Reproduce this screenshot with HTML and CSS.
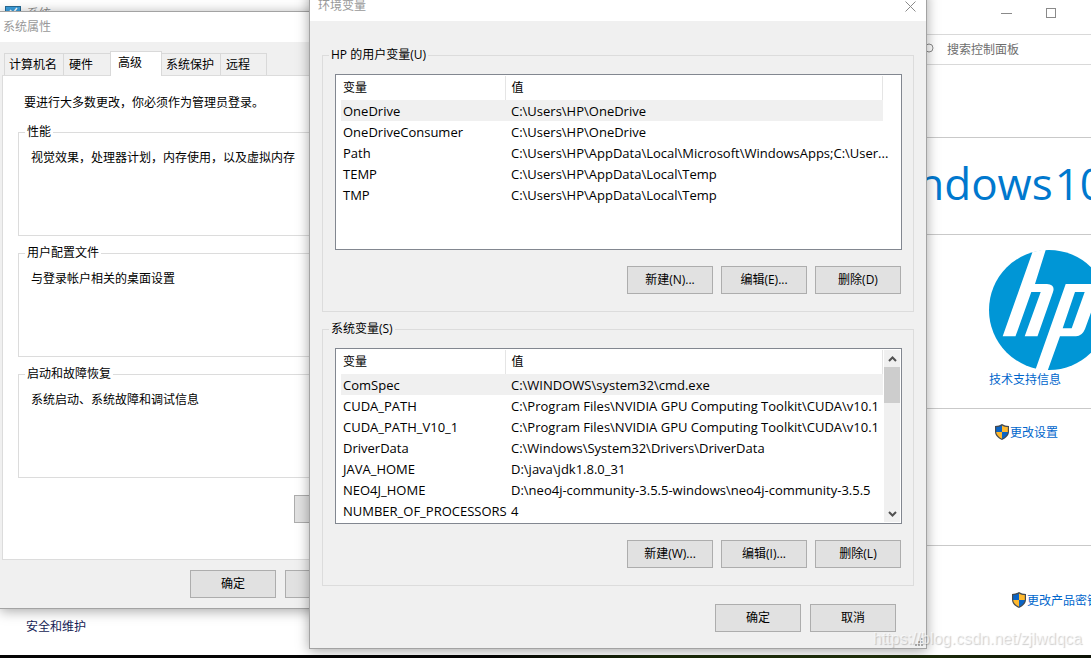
FILE: index.html
```html
<!DOCTYPE html>
<html lang="zh-CN">
<head>
<meta charset="utf-8">
<title>环境变量</title>
<link rel="stylesheet" href="styles.css">
</head>
<body>
<svg class="defs" aria-hidden="true">
  <symbol id="shield" viewBox="0 0 14 16">
    <path fill="#454a4f" d="M7 0 C9 1.3 11 2 14 2 V7.500 C14 11.500 11 14.200 7 16 C3 14.200 0 11.500 0 7.500 V2 C3 2 5 1.300 7 0Z"/>
    <path fill="#0b64c5" d="M7 1.400 V8 H1.200 V3.100 C3.300 3 5.200 2.400 7 1.400Z"/>
    <path fill="#ffb92e" d="M7 1.400 V8 H12.800 V3.100 C10.700 3 8.800 2.400 7 1.400Z"/>
    <path fill="#ffb92e" d="M7 8 H1.200 C1.400 11 3.700 13.100 7 14.700Z"/>
    <path fill="#0b64c5" d="M7 8 H12.800 C12.600 11 10.300 13.100 7 14.700Z"/>
  </symbol>
</svg>

<main class="desktop">
  <section class="panel-window" aria-label="系统">
    <header class="panel-title">
      <svg class="app-icon" width="16" height="13" viewBox="0 0 16 13"><rect x=".5" y=".5" width="15" height="12" fill="#3aa0e0" stroke="#286a94"/><path d="M5 4l3 3 4-5" stroke="#fff" stroke-width="1.500" fill="none"/></svg>
      <span class="panel-name">系统</span>
      <div class="panel-controls">
        <button class="caption-btn" aria-label="最小化"><svg width="11" height="11"><path d="M0 5.500h11" stroke="#8a8a8a"/></svg></button>
        <button class="caption-btn" aria-label="最大化"><svg width="11" height="11"><rect x=".5" y=".5" width="9" height="9" fill="none" stroke="#8a8a8a"/></svg></button>
      </div>
    </header>
    <div class="panel-search">
      <label class="search">
        <svg width="16" height="16" viewBox="0 0 16 16" aria-hidden="true"><circle cx="9" cy="6" r="4" fill="none" stroke="#8c8c8c"/><path d="M6 9l-5 5" stroke="#8c8c8c"/></svg>
        <input type="search" placeholder="搜索控制面板" aria-label="搜索控制面板">
      </label>
    </div>
    <div class="panel-body">
      <nav class="panel-nav"><a class="nav-link" href="#">安全和维护</a></nav>
      <div class="panel-content">
        <div class="band band-head"></div>
        <div class="band band-brand"><div class="brand"><span>Windows</span><span>10</span></div></div>
        <div class="band band-maker">
          <svg class="hp" width="120" height="120" viewBox="0 0 120 120" role="img" aria-label="HP">
            <circle cx="60" cy="60" r="60" fill="#0096d6"/>
            <path fill="#fff" d="M43.500 2 L57 -1 L46 34 H58 Q66.500 34.500 64 42 L48.500 86.300 H35.700 L51.700 42 H42.300 L26.500 86.300 H13.700Z"/>
            <path fill="#fff" fill-rule="evenodd" d="M76.700 34 H104 Q112 35 109 43 L96 79 Q93 86.300 87 86.300 H71 L58.500 121 H46 Z M86 42 L73.700 78.300 H82.700 L95.700 42Z"/>
          </svg>
          <a class="link" href="#">技术支持信息</a>
        </div>
        <div class="band band-settings"><a class="link" href="#"><svg width="14" height="16"><use href="#shield"/></svg>更改设置</a></div>
        <div class="band band-key"><a class="link" href="#"><svg width="14" height="16"><use href="#shield"/></svg>更改产品密钥</a></div>
      </div>
    </div>
  </section>

  <section class="window props" aria-label="系统属性">
    <header class="title">系统属性</header>
    <div class="tabs" role="tablist">
      <button class="tab tab-long" role="tab">计算机名</button>
      <button class="tab" role="tab">硬件</button>
      <button class="tab active" role="tab" aria-selected="true">高级</button>
      <button class="tab tab-long" role="tab">系统保护</button>
      <button class="tab" role="tab">远程</button>
    </div>
    <div class="tab-page">
      <p class="intro">要进行大多数更改，你必须作为管理员登录。</p>
      <div class="groups">
        <fieldset class="group"><legend>性能</legend><p>视觉效果，处理器计划，内存使用，以及虚拟内存</p></fieldset>
        <fieldset class="group"><legend>用户配置文件</legend><p>与登录帐户相关的桌面设置</p></fieldset>
        <fieldset class="group"><legend>启动和故障恢复</legend><p>系统启动、系统故障和调试信息</p></fieldset>
      </div>
      <div class="env-row"><button class="btn btn-wide" aria-label="环境变量"></button></div>
    </div>
    <footer class="actions"><button class="btn">确定</button><button class="btn" aria-label="取消"></button><button class="btn" aria-label="应用"></button></footer>
  </section>

  <section class="window env" role="dialog" aria-label="环境变量">
    <header class="title">环境变量
      <button class="close" aria-label="关闭"><svg width="11" height="11" viewBox="0 0 11 11"><path d="M.5 .5l10 10M10.500 .5l-10 10" stroke="#8a8a8a"/></svg></button>
    </header>
    <div class="env-body">
      <fieldset class="vars">
        <legend>HP 的用户变量(U)</legend>
        <div class="list">
          <table>
            <thead><tr><th class="name">变量</th><th>值</th></tr></thead>
            <tbody>
              <tr class="selected"><td>OneDrive</td><td>C:\Users\HP\OneDrive</td></tr>
              <tr><td>OneDriveConsumer</td><td>C:\Users\HP\OneDrive</td></tr>
              <tr><td>Path</td><td>C:\Users\HP\AppData\Local\Microsoft\WindowsApps;C:\User...</td></tr>
              <tr><td>TEMP</td><td>C:\Users\HP\AppData\Local\Temp</td></tr>
              <tr><td>TMP</td><td>C:\Users\HP\AppData\Local\Temp</td></tr>
            </tbody>
          </table>
        </div>
        <div class="buttons"><button class="btn">新建(N)...</button><button class="btn">编辑(E)...</button><button class="btn">删除(D)</button></div>
      </fieldset>
      <fieldset class="vars">
        <legend>系统变量(S)</legend>
        <div class="list">
          <table>
            <thead><tr><th class="name">变量</th><th>值</th></tr></thead>
            <tbody>
              <tr class="selected"><td>ComSpec</td><td>C:\WINDOWS\system32\cmd.exe</td></tr>
              <tr><td>CUDA_PATH</td><td>C:\Program Files\NVIDIA GPU Computing Toolkit\CUDA\v10.1</td></tr>
              <tr><td>CUDA_PATH_V10_1</td><td>C:\Program Files\NVIDIA GPU Computing Toolkit\CUDA\v10.1</td></tr>
              <tr><td>DriverData</td><td>C:\Windows\System32\Drivers\DriverData</td></tr>
              <tr><td>JAVA_HOME</td><td>D:\java\jdk1.8.0_31</td></tr>
              <tr><td>NEO4J_HOME</td><td>D:\neo4j-community-3.5.5-windows\neo4j-community-3.5.5</td></tr>
              <tr><td>NUMBER_OF_PROCESSORS</td><td>4</td></tr>
            </tbody>
          </table>
          <div class="scrollbar">
            <button class="arrow" aria-label="向上"><svg width="9" height="6" viewBox="0 0 9 6"><path d="M1 5l3.500-3.500L8 5" fill="none" stroke="#505050" stroke-width="2"/></svg></button>
            <div class="thumb"></div>
            <button class="arrow arrow-down" aria-label="向下"><svg width="9" height="6" viewBox="0 0 9 6"><path d="M1 1l3.500 3.500L8 1" fill="none" stroke="#505050" stroke-width="2"/></svg></button>
          </div>
        </div>
        <div class="buttons"><button class="btn">新建(W)...</button><button class="btn">编辑(I)...</button><button class="btn">删除(L)</button></div>
      </fieldset>
    </div>
    <footer class="actions"><button class="btn">确定</button><button class="btn">取消</button></footer>
    <svg class="grip" width="8" height="8" fill="#a8a8a8" aria-hidden="true"><path d="M6 0h2v2h-2zM3 3h2v2h-2zM6 3h2v2h-2zM0 6h2v2h-2zM3 6h2v2h-2zM6 6h2v2h-2z"/></svg>
  </section>

  <span class="watermark">https://blog.csdn.net/zjlwdqca</span>
</main>
</body>
</html>
```

FILE: styles.css
```css
* { box-sizing: border-box; }

body {
  margin: 0;
  font: 12px/16px "Open Sans", "Noto Sans CJK SC", sans-serif;
  color: #000;
}

p { margin: 0; }

button, input { font: inherit; color: inherit; }

.defs { position: absolute; width: 0; height: 0; }

.desktop {
  position: relative;
  display: flex;
  height: 100vh;
  padding-bottom: 3px;
  overflow: hidden;
  background: linear-gradient(90deg, #050505 45%, #1a2a08 60%, #22330c 80%, #0c1206);
}

/* Control panel window behind the dialogs */
.panel-window {
  flex: 1;
  display: flex;
  flex-direction: column;
  min-width: 0;
  overflow: hidden;
  background: #fff;
}

.panel-title {
  display: flex;
  height: 35px;
  padding: 6px 34px 0 5px;
  gap: 6px;
  border-bottom: 1px solid #d9d9d9;
}

.panel-name { color: #8a8a8a; }
.app-icon { flex: none; }

.panel-controls {
  display: flex;
  gap: 34px;
  margin-left: auto;
  padding-top: 2px;
}

.caption-btn, .close {
  display: flex;
  width: 11px;
  height: 11px;
  padding: 0;
  border: 0;
  background: none;
}

.panel-search {
  display: flex;
  justify-content: flex-end;
  height: 30px;
  border-bottom: 1px solid #d9d9d9;
}

.search {
  display: flex;
  align-items: center;
  gap: 11px;
  width: 171px;
}

.search svg { flex: none; }

.search input {
  width: 120px;
  padding: 0;
  border: 0;
  outline: 0;
  background: none;
}

.search input::placeholder { color: #6d6d6d; opacity: 1; }

.panel-body {
  flex: 1;
  display: grid;
  grid-template-columns: 1fr 165px;
}

.panel-nav {
  display: flex;
  align-items: flex-end;
  padding: 0 26px 20px;
}

.nav-link { color: #151c55; text-decoration: none; }

.panel-content { min-width: 0; }

.band {
  border-bottom: 1px solid #c9c9c9;
  white-space: nowrap;
}

.band-head { height: 73px; }

.band-brand {
  display: flex;
  align-items: center;
  justify-content: flex-end;
  height: 97px;
  padding-bottom: 6px;
}

.brand {
  display: flex;
  flex: none;
  gap: 2px;
  margin-right: -14px;
  font-size: 44px;
  line-height: 64px;
  color: #0078ce;
}

.band-maker {
  display: flex;
  flex-direction: column;
  gap: 1px;
  height: 174px;
  padding: 15px 0 0 63px;
}

.hp { flex: none; }
.band-settings { height: 137px; padding: 15px 0 0 69px; }
.band-key { padding: 46px 0 0 86px; border: 0; }

.link {
  display: flex;
  gap: 1px;
  line-height: 18px;
  color: #0066cc;
  text-decoration: none;
}

.link svg { flex: none; }

/* Dialog windows */
.window {
  position: absolute;
  display: flex;
  flex-direction: column;
  border: 1px solid #a3a3a3;
  background: #f0f0f0;
  box-shadow: 0 2px 12px rgba(0, 0, 0, .35);
}

.title {
  display: flex;
  align-items: center;
  height: 30px;
  background: #fff;
  color: #999;
}

.btn {
  width: 86px;
  height: 28px;
  padding: 0;
  border: 1px solid #adadad;
  background: #e1e1e1;
  text-align: center;
}

.actions {
  display: flex;
  justify-content: flex-end;
  gap: 9px;
}

fieldset {
  min-width: 0;
  margin: 0;
  border: 1px solid #dcdcdc;
}

legend { padding: 0 2px; }

.props {
  top: 11px;
  left: 0;
  width: 476px;
  border-left: 0;
  padding-bottom: 10px;
}

.props .title { padding-left: 3px; }

.tabs {
  display: flex;
  align-items: flex-end;
  margin-top: 9px;
  padding-left: 4px;
}

.tab {
  width: 47px;
  height: 22px;
  padding: 0 0 0 5px;
  border: 1px solid #d9d9d9;
  border-bottom: 0;
  border-right: 0;
  background: #f0f0f0;
  text-align: left;
}

.tab-long { width: 59px; padding-left: 4px; }
.tab:last-child { border-right: 1px solid #d9d9d9; }

.tab.active {
  z-index: 1;
  width: 52px;
  height: 25px;
  margin: 0 -1px -1px 0;
  padding: 0 0 3px 7px;
  border-right: 1px solid #d9d9d9;
  background: #fff;
}

.tab-page {
  margin: 0 5px 0 2px;
  padding: 19px 15px 36px;
  border: 1px solid #dcdcdc;
  background: #fff;
}

.intro { padding-left: 6px; }

.groups {
  display: grid;
  gap: 9px;
  padding-top: 13px;
}

.group {
  min-height: 112px;
  padding: 10px 12px 0;
}

.group legend { margin-left: -6px; }

.env-row {
  display: flex;
  justify-content: flex-end;
  padding-top: 17px;
}

.btn-wide { width: 160px; }
.props .actions { padding: 10px 9px 0; }

.env {
  top: -10px;
  left: 309px;
  right: 164px;
  padding-bottom: 16px;
}

.env .title { padding: 0 10px 0 8px; }
.close { margin-left: auto; }

.env-body {
  display: grid;
  gap: 9px;
  padding: 26px 12px 0;
}

.vars { padding: 11px 11px 17px 12px; }
.vars legend { margin-left: -6px; }

.list {
  display: grid;
  grid-template-columns: 1fr 17px;
  align-items: start;
  gap: 1px;
  height: 176px;
  padding: 1px 0 1px 5px;
  border: 1px solid #828790;
  background: #fff;
  overflow: hidden;
}

table {
  width: 100%;
  table-layout: fixed;
  border-collapse: collapse;
  font-size: 13px;
}

th, td {
  height: 21px;
  padding: 0 0 0 2px;
  text-align: left;
  white-space: nowrap;
}

th {
  height: 24px;
  border-right: 1px solid #e5e5e5;
  font-size: 12px;
  font-weight: 400;
}

.name { width: 164px; }
th + th, td + td { padding-left: 6px; }
.selected { background: #f0f0f0; }

.scrollbar {
  display: flex;
  flex-direction: column;
  width: 16px;
  height: 172px;
  background: #f0f0f0;
}

.arrow {
  display: flex;
  align-items: center;
  justify-content: center;
  height: 17px;
  padding: 0;
  border: 0;
  background: none;
}

.arrow-down { margin-top: auto; }
.thumb { height: 36px; background: #cdcdcd; }

.buttons {
  display: flex;
  justify-content: flex-end;
  gap: 8px;
  padding: 16px 1px 0 0;
}

.env .actions { padding: 18px 30px 0; }

.grip {
  position: absolute;
  right: 3px;
  bottom: 2px;
}

.watermark {
  position: absolute;
  right: 9px;
  bottom: 9px;
  font: 16px/20px "Liberation Sans", sans-serif;
  color: rgba(255, 255, 255, .6);
  text-shadow: 1px 1px 1px rgba(0, 0, 0, .2);
}
```
